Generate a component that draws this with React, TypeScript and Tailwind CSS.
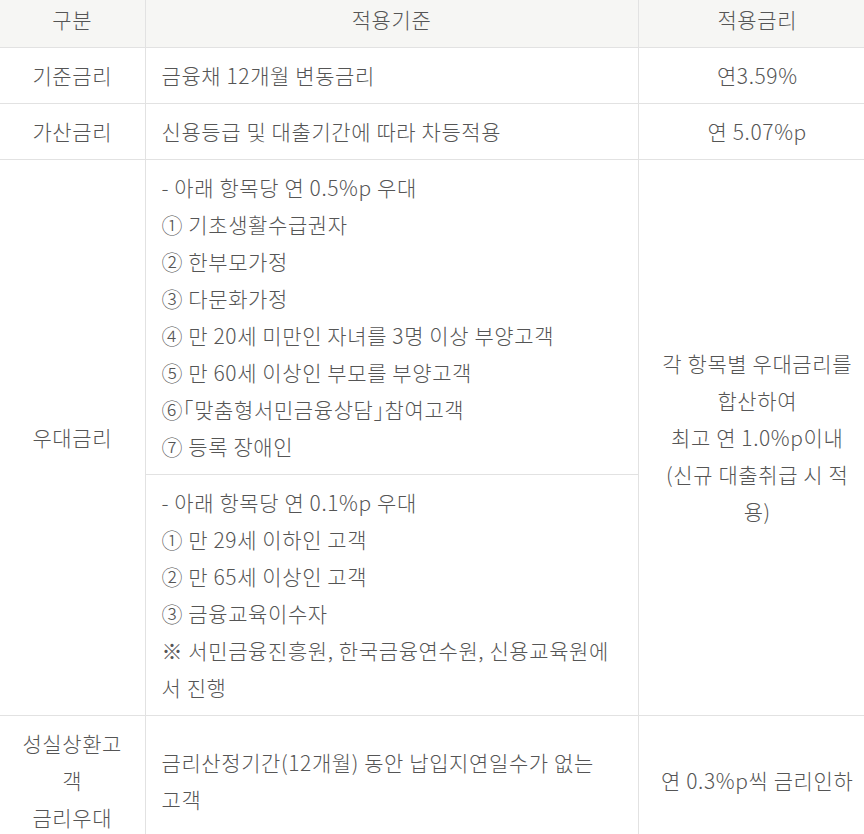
import React from 'react';

const font = { fontFamily: '"Noto Sans CJK KR", "Noto Sans", sans-serif' };

const firstGroup = [
  '- 아래 항목당 연 0.5%p 우대',
  '① 기초생활수급권자',
  '② 한부모가정',
  '③ 다문화가정',
  '④ 만 20세 미만인 자녀를 3명 이상 부양고객',
  '⑤ 만 60세 이상인 부모를 부양고객',
  '⑥｢맞춤형서민금융상담｣참여고객',
  '⑦ 등록 장애인',
];

const secondGroup = [
  '- 아래 항목당 연 0.1%p 우대',
  '① 만 29세 이하인 고객',
  '② 만 65세 이상인 고객',
  '③ 금융교육이수자',
  '※ 서민금융진흥원, 한국금융연수원, 신용교육원에서 진행',
];

const cell = 'border-[#e2e2e2] px-[16px] py-[9px] align-middle break-all';
const mid = `${cell} border-l pr-[20px]`;

export default function App() {
  return (
    <div className="w-[864px] h-[834px] overflow-hidden bg-white" style={font}>
      <table className="-mt-[8px] w-[876px] table-fixed border-collapse text-[21px] leading-[37px] tracking-[0.6px] font-light text-[#555555]">
        <colgroup>
          <col className="w-[145px]" />
          <col className="w-[493px]" />
          <col className="w-[238px]" />
        </colgroup>
        <thead>
          <tr className="bg-[#f6f6f4]">
            <th className={`${cell} font-light text-center`}>구분</th>
            <th className={`${cell} border-l font-light text-center`}>적용기준</th>
            <th className={`${cell} border-l font-light text-center`}>적용금리</th>
          </tr>
        </thead>
        <tbody>
          <tr className="border-t border-[#e2e2e2]">
            <td className={`${cell} text-center`}>기준금리</td>
            <td className={mid}>금융채 12개월 변동금리</td>
            <td className={`${cell} border-l text-center`}>연3.59%</td>
          </tr>
          <tr className="border-t border-[#e2e2e2]">
            <td className={`${cell} text-center`}>가산금리</td>
            <td className={mid}>신용등급 및 대출기간에 따라 차등적용</td>
            <td className={`${cell} border-l text-center`}>연 5.07%p</td>
          </tr>
          <tr className="border-t border-[#e2e2e2]">
            <td rowSpan={2} className={`${cell} text-center`}>우대금리</td>
            <td className={mid}>
              {firstGroup.map((line) => (
                <div key={line}>{line}</div>
              ))}
            </td>
            <td rowSpan={2} className={`${cell} border-l text-center px-[22px]`}>
              각 항목별 우대금리를 합산하여
              <br />
              최고 연 1.0%p이내 (신규 대출취급 시 적용)
            </td>
          </tr>
          <tr className="border-t border-[#e2e2e2]">
            <td className={mid}>
              {secondGroup.map((line) => (
                <div key={line}>{line}</div>
              ))}
            </td>
          </tr>
          <tr className="border-t border-[#e2e2e2]">
            <td className={`${cell} text-center`}>
              성실상환고객
              <br />
              금리우대
            </td>
            <td className={mid}>금리산정기간(12개월) 동안 납입지연일수가 없는 고객</td>
            <td className={`${cell} border-l text-center`}>연 0.3%p씩 금리인하</td>
          </tr>
        </tbody>
      </table>
    </div>
  );
}
